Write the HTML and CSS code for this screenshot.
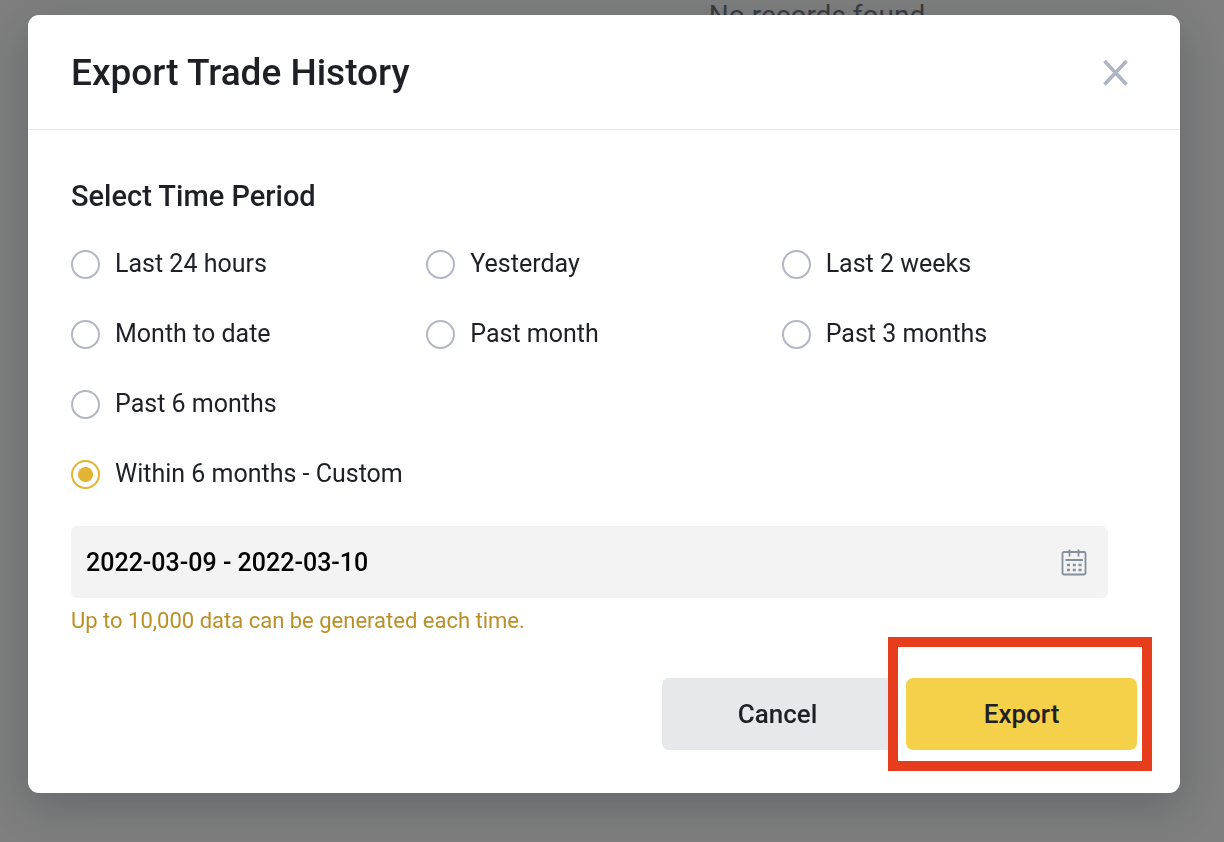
FILE: index.html
```
<!DOCTYPE html>
<html lang="en">

<head>
    <meta charset="utf-8">
    <title>Export Trade History</title>
    <link rel="stylesheet" href="styles.css">
</head>

<body>
    <main class="page">
        <p class="empty-text">No records found</p>
    </main>

    <div class="overlay">
        <form class="modal" role="dialog" aria-labelledby="modal-title">
            <header class="modal-header">
                <h1 id="modal-title">Export Trade History</h1>
                <button class="close-btn" type="button" aria-label="Close">
                    <svg width="28" height="28" viewBox="0 0 28 28" fill="none" stroke="#aeb4c1" stroke-width="3.600">
                        <path d="M2.500 2l22 23.500M24.500 2L2.500 25.500" />
                    </svg>
                </button>
            </header>

            <div class="modal-body">
                <h2 id="period-title">Select Time Period</h2>
                <div class="periods" role="radiogroup" aria-labelledby="period-title">
                    <label class="period"><input type="radio" name="period"> Last 24 hours</label>
                    <label class="period"><input type="radio" name="period"> Yesterday</label>
                    <label class="period"><input type="radio" name="period"> Last 2 weeks</label>
                    <label class="period"><input type="radio" name="period"> Month to date</label>
                    <label class="period"><input type="radio" name="period"> Past month</label>
                    <label class="period"><input type="radio" name="period"> Past 3 months</label>
                    <label class="period wide"><input type="radio" name="period"> Past 6 months</label>
                    <label class="period wide"><input type="radio" name="period" checked> Within 6 months - Custom</label>
                </div>

                <div class="date-field">
                    <input type="text" class="date-input" aria-label="Date range" value="2022-03-09 - 2022-03-10">
                    <svg width="26" height="28" viewBox="0 0 26 28" fill="none" stroke="#848e9c" stroke-width="1.800">
                        <rect x="1.500" y="4" width="23" height="22.500" rx="1.500" />
                        <path d="M8.500 1.500v7M17.500 1.500v7M4.500 12h17.500" />
                        <path d="M6 17h3M11.800 17h3M17.500 17h3M6 22h3M11.800 22h3M17.500 22h3" stroke-width="2.600" />
                    </svg>
                </div>
                <p class="hint">Up to 10,000 data can be generated each time.</p>
            </div>

            <footer class="modal-footer">
                <button class="btn" type="button">Cancel</button>
                <div class="export-wrap">
                    <div class="highlight"></div>
                    <button class="btn btn-primary" type="submit">Export</button>
                </div>
            </footer>
        </form>
    </div>
</body>

</html>
```

FILE: styles.css
```
* {
    box-sizing: border-box;
}

body {
    margin: 0;
    min-height: 100vh;
    background-color: #fff;
    color: #1e2026;
    font-family: Roboto, "Liberation Sans", sans-serif;
}

h1,
h2,
p {
    margin: 0;
    font-weight: 500;
}

.page {
    padding-left: 410px;
    text-align: center;
}

.empty-text {
    color: #707a8a;
    font-size: 28px;
    font-weight: 400;
    line-height: 32px;
}

/* dimmed layer that holds the dialog */
.overlay {
    position: fixed;
    inset: 0;
    display: flex;
    align-items: flex-start;
    padding: 15px 44px 48px 28px;
    background-color: rgba(0, 0, 0, 0.5);
    overflow: hidden;
}

.modal {
    flex: 1;
    background-color: #fff;
    border-radius: 11px;
    box-shadow: 0 14px 48px rgba(24, 32, 40, 0.26);
}

.modal-header {
    display: flex;
    align-items: center;
    justify-content: space-between;
    padding: 34px 48px 32px 43px;
    border-bottom: 1px solid #e6e8ea;
}

.modal-header h1 {
    font-size: 37px;
    line-height: 48px;
}

.close-btn {
    display: flex;
    padding: 2px;
    border: none;
    background: none;
    cursor: pointer;
}

.modal-body {
    padding: 46px 43px 0;
}

.modal-body h2 {
    font-size: 29px;
    line-height: 40px;
}

.periods {
    display: grid;
    grid-template-columns: repeat(3, 1fr);
    row-gap: 30px;
    margin: 28px 0 32px;
}

.period {
    display: flex;
    align-items: center;
    gap: 15px;
    font-size: 25px;
    line-height: 40px;
    cursor: pointer;
}

.period.wide {
    grid-column: 1 / -1;
}

.period input {
    appearance: none;
    width: 29px;
    height: 29px;
    margin: 0;
    border: 2px solid #b3b7c4;
    border-radius: 50%;
}

.period input:checked {
    border-color: #e5b52f;
    background: radial-gradient(circle, #e3b333 7px, transparent 8px);
}

.date-field {
    display: flex;
    align-items: center;
    height: 72px;
    margin-right: 29px;
    padding: 0 21px 0 15px;
    border-radius: 6px;
    background-color: #f3f3f3;
}

.date-input {
    flex: 1;
    min-width: 0;
    padding: 0;
    border: none;
    background: none;
    color: #000;
    font-family: inherit;
    font-size: 25px;
    font-weight: 500;
    outline: none;
}

.hint {
    margin-top: 7px;
    color: #bb8f27;
    font-size: 22px;
    font-weight: 400;
    line-height: 32px;
}

.modal-footer {
    display: flex;
    justify-content: flex-end;
    gap: 13px;
    padding: 41px 43px 43px;
}

.btn {
    width: 231px;
    height: 72px;
    border: none;
    border-radius: 7px;
    background-color: #e7e8ec;
    color: #1e2026;
    font-family: inherit;
    font-size: 26px;
    font-weight: 500;
    cursor: pointer;
}

.export-wrap {
    position: relative;
}

.btn-primary {
    position: relative;
    background-color: #f5d149;
}

/* red frame around the export button */
.highlight {
    position: absolute;
    inset: -41px -15px -21px -18px;
    border: 10px solid #e63e1c;
    background-color: #fff;
    pointer-events: none;
}
```
